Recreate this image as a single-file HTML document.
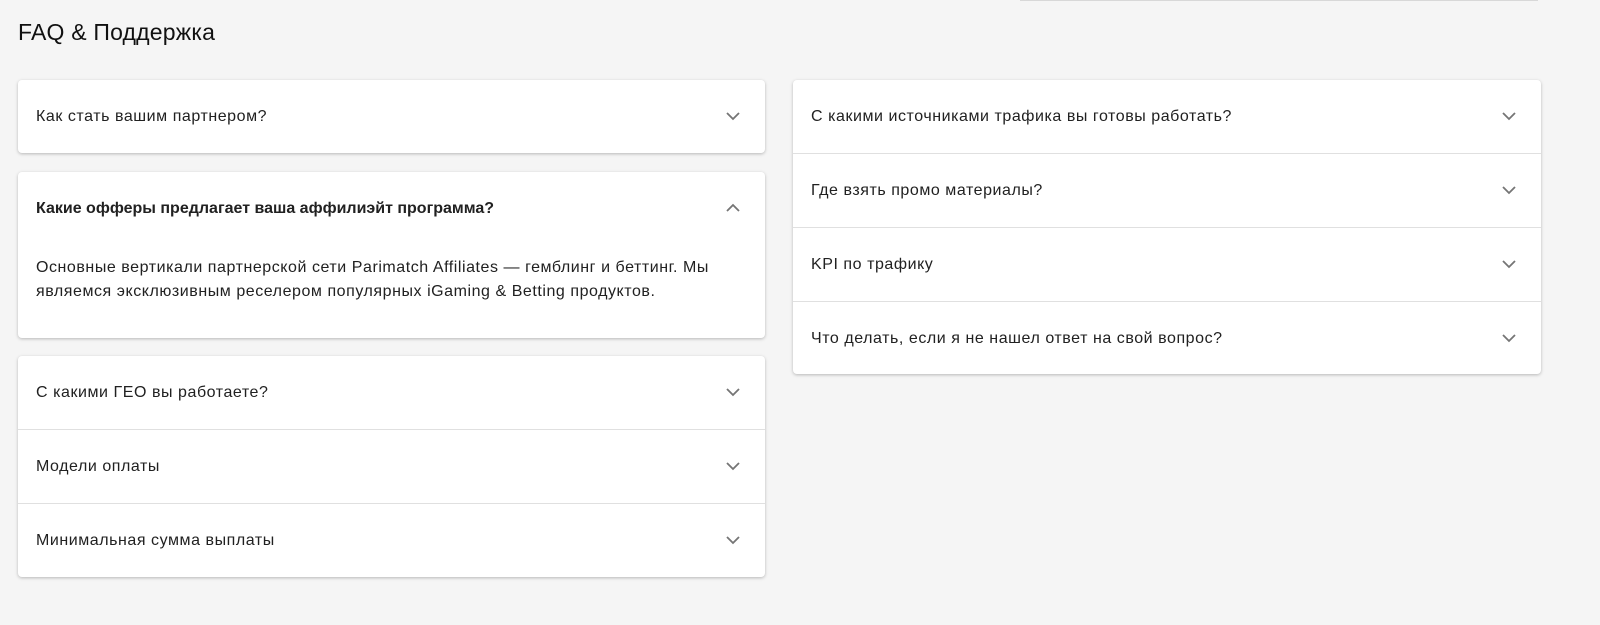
<!DOCTYPE html>
<html><head><meta charset="utf-8"><style>
body{margin:0;background:#f5f5f5;font-family:"Liberation Sans",sans-serif;color:#212121;width:1600px;height:625px;overflow:hidden;position:relative}
.top{position:absolute;left:1020px;top:0;width:518px;height:1px;background:#d8d8d8}
h1{position:absolute;left:18px;top:19px;margin:0;font-size:23px;font-weight:normal;color:#111;letter-spacing:0.2px}
.card{position:absolute;background:#fff;border-radius:4px;box-shadow:0 1px 3px rgba(0,0,0,.25)}
.row{height:73px;border-bottom:1px solid #e0e0e0;position:relative;font-size:16px;letter-spacing:0.55px;line-height:73px;padding-left:18px}
.row:last-child{border-bottom:none}
.row b{letter-spacing:0}
.ch{position:absolute;right:24px;top:31px;width:16px;height:10px}
.ans{font-size:16px;letter-spacing:0.55px;line-height:24px;padding:0 18px;margin-top:11px}
</style></head><body>
<div class="top"></div>
<h1>FAQ &amp; Поддержка</h1>
<div class="card" style="left:18px;top:80px;width:747px;height:73px">
<div class="row">Как стать вашим партнером?<svg class="ch" viewBox="0 0 16 10"><path d="M2 2l6 6 6-6" fill="none" stroke="#757575" stroke-width="1.8"/></svg></div></div>
<div class="card" style="left:18px;top:172px;width:747px;height:166px">
<div class="row" style="border:none"><b>Какие офферы предлагает ваша аффилиэйт программа?</b><svg class="ch" viewBox="0 0 16 10"><path d="M2 8l6-6 6 6" fill="none" stroke="#757575" stroke-width="1.8"/></svg></div>
<div class="ans">Основные вертикали партнерской сети Parimatch Affiliates — гемблинг и беттинг. Мы являемся эксклюзивным реселером популярных iGaming &amp; Betting продуктов.</div></div>
<div class="card" style="left:18px;top:356px;width:747px;height:221px">
<div class="row">С какими ГЕО вы работаете?<svg class="ch" viewBox="0 0 16 10"><path d="M2 2l6 6 6-6" fill="none" stroke="#757575" stroke-width="1.8"/></svg></div>
<div class="row">Модели оплаты<svg class="ch" viewBox="0 0 16 10"><path d="M2 2l6 6 6-6" fill="none" stroke="#757575" stroke-width="1.8"/></svg></div>
<div class="row">Минимальная сумма выплаты<svg class="ch" viewBox="0 0 16 10"><path d="M2 2l6 6 6-6" fill="none" stroke="#757575" stroke-width="1.8"/></svg></div></div>
<div class="card" style="left:793px;top:80px;width:748px;height:294px">
<div class="row">С какими источниками трафика вы готовы работать?<svg class="ch" viewBox="0 0 16 10"><path d="M2 2l6 6 6-6" fill="none" stroke="#757575" stroke-width="1.8"/></svg></div>
<div class="row">Где взять промо материалы?<svg class="ch" viewBox="0 0 16 10"><path d="M2 2l6 6 6-6" fill="none" stroke="#757575" stroke-width="1.8"/></svg></div>
<div class="row">KPI по трафику<svg class="ch" viewBox="0 0 16 10"><path d="M2 2l6 6 6-6" fill="none" stroke="#757575" stroke-width="1.8"/></svg></div>
<div class="row">Что делать, если я не нашел ответ на свой вопрос?<svg class="ch" viewBox="0 0 16 10"><path d="M2 2l6 6 6-6" fill="none" stroke="#757575" stroke-width="1.8"/></svg></div></div>
</body></html>
